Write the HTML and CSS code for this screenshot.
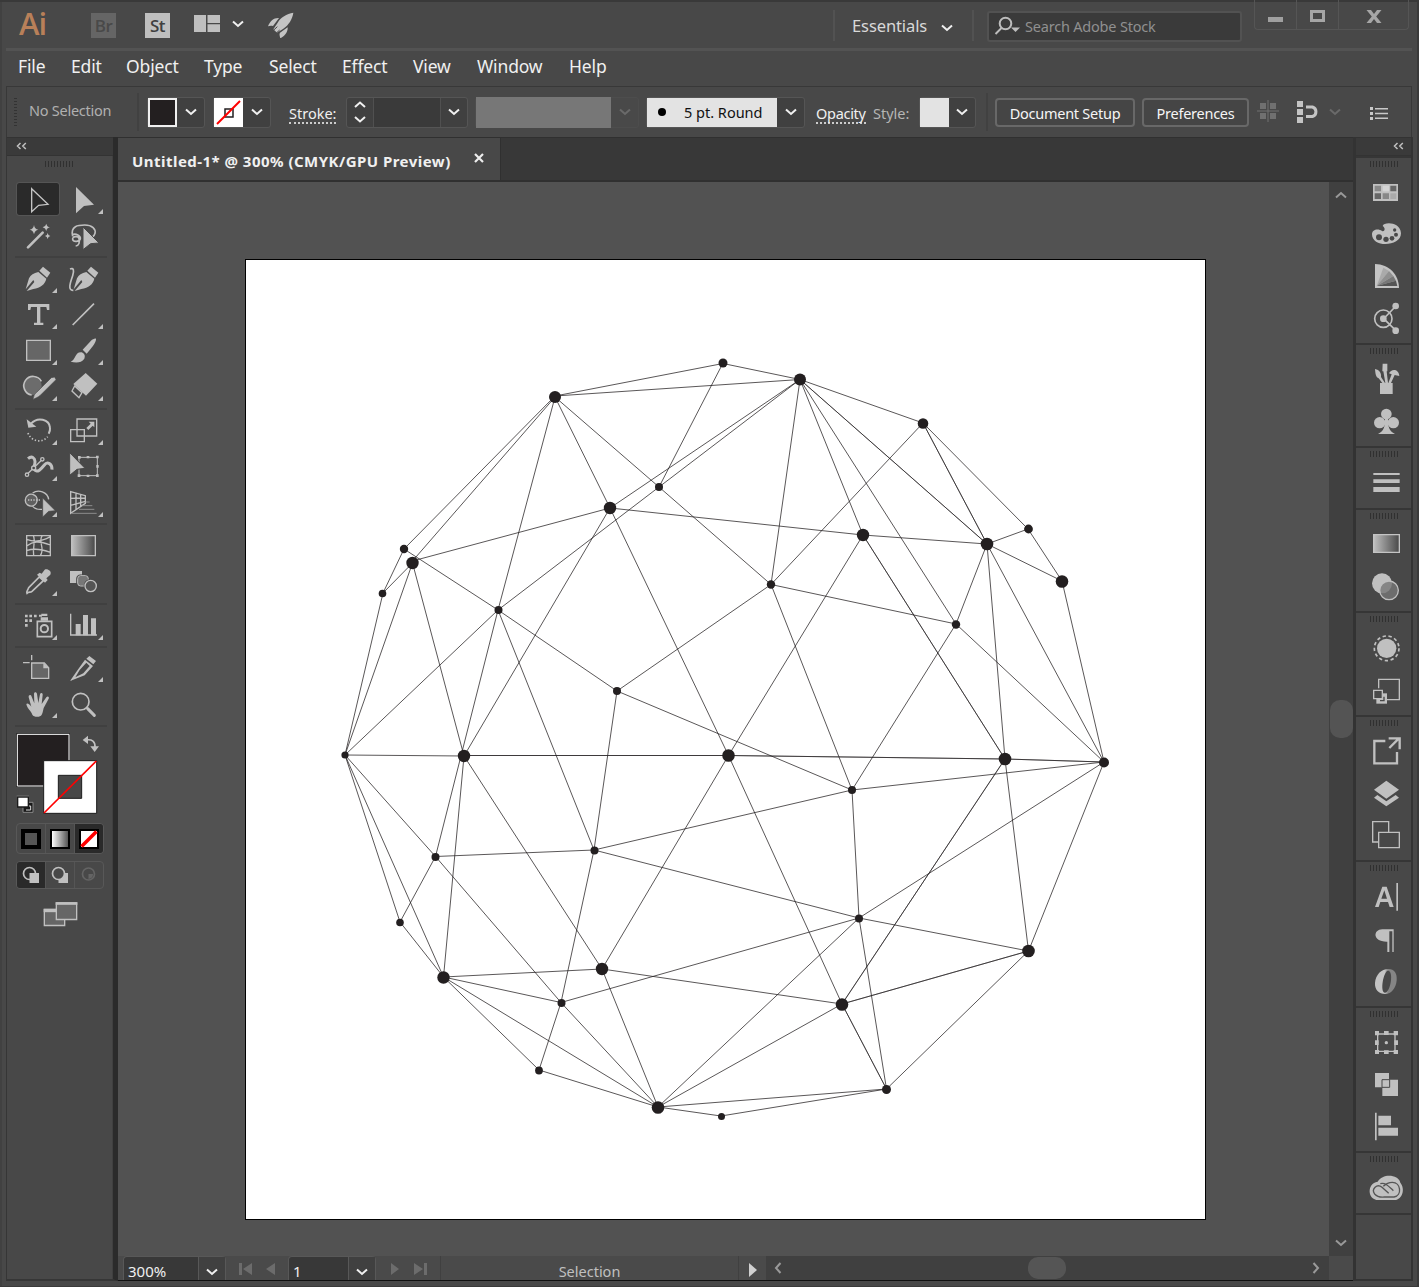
FILE: index.html
```html
<!DOCTYPE html>
<html lang="en">
<head>
<meta charset="utf-8">
<title>Untitled-1 @ 300%</title>
<link rel="stylesheet" href="styles.css">
</head>
<body>
<svg width="0" height="0" class="defs">
  <defs>
    <linearGradient id="fade"><stop offset="0" stop-color="#c0c0c0"/><stop offset="1" stop-color="#484848"/></linearGradient>
    <linearGradient id="glyph"><stop offset=".45" stop-color="#c4c4c4"/><stop offset=".6" stop-color="#858585"/></linearGradient>
    <symbol id="down" viewBox="0 0 12 8"><path d="M1 1.5l5 4.5 5-4.5" fill="none" stroke="currentColor" stroke-width="2"/></symbol>
    <symbol id="left2" viewBox="0 0 11 8"><path d="M4.500 1L1.500 4l3 3M9.800 1L6.800 4l3 3" fill="none" stroke="currentColor" stroke-width="1.500"/></symbol>
  </defs>
</svg>
<div class="window">
  <header class="titlebar">
    <span class="logo">Ai</span>
    <span class="app br">Br</span>
    <span class="app st">St</span>
    <svg class="arrange" viewBox="0 0 26 17"><path fill="#bfbfbf" d="M0 0h12v17H0zM13.500 0H26v8H13.500zM13.500 9.300H26V17H13.500z"/></svg>
    <svg class="chev light"><use href="#down"/></svg>
    <svg class="rocket" viewBox="806 34 78 78"><g fill="#c4c4c4"><path d="M882 36c-20 3-38 14-47 30l-13 20 11 10 19-12c16-11 27-28 30-48z"/><path d="M839 52c-16-1-27 9-33 25 5-2 10-2 15-1zM865 80c1 13-7 25-22 33-2-7-4-12-1-17z"/></g><path d="M820 91l14-13M829 99l12-11" stroke="#484848" stroke-width="3"/></svg>
    <span class="bar b1"></span>
    <span class="workspace">Essentials</span>
    <svg class="chev light ws"><use href="#down"/></svg>
    <span class="bar b2"></span>
    <div class="search">
      <svg viewBox="0 0 26 20"><g fill="none" stroke="#bdbdbd" stroke-width="2"><circle cx="11.500" cy="7.500" r="5.800"/><path d="M7.500 12L1.500 18"/></g><path d="M17 11.500h9L21.500 16z" fill="#bdbdbd"/></svg>
      <span>Search Adobe Stock</span>
    </div>
    <div class="controls"><span><i class="min"></i></span><span><i class="max"></i></span><span class="x"><svg viewBox="0 0 16 13" preserveAspectRatio="none"><path d="M.5 0h4.500l3 4 3-4h4.500L10.200 6.500 15.500 13H11L8 9l-3 4H.5l5.300-6.500z" fill="#a6a6a6"/></svg></span></div>
  </header>
  <nav class="menu"><span>File</span><span>Edit</span><span>Object</span><span>Type</span><span>Select</span><span>Effect</span><span>View</span><span>Window</span><span>Help</span></nav>
  <div class="options">
    <i class="vgrip"></i>
    <span class="nosel">No Selection</span>
    <i class="sep s1"></i>
    <div class="combo fill"><b class="sw dark"></b><svg class="chev"><use href="#down"/></svg></div>
    <div class="combo line"><b class="sw none"><svg viewBox="0 0 29 29"><path d="M11 11h8v8h-8z" fill="none" stroke="#231f20" stroke-width="1.500"/><path d="M3 26L26 3" stroke="red" stroke-width="2"/></svg></b><svg class="chev"><use href="#down"/></svg></div>
    <span class="link stroke">Stroke:</span>
    <div class="combo weight"><svg class="step" viewBox="0 0 12 22"><path d="M1 6l5-4.500L11 6M1 16l5 4.500 5-4.500" fill="none" stroke="#f0f0f0" stroke-width="2"/></svg><b class="field"></b><svg class="chev"><use href="#down"/></svg></div>
    <div class="combo profile"><b></b><svg class="chev dim"><use href="#down"/></svg></div>
    <div class="combo brush"><b><i></i>5 pt. Round</b><svg class="chev"><use href="#down"/></svg></div>
    <span class="link opacity">Opacity</span>
    <span class="style">Style:</span>
    <div class="combo look"><b class="sw"></b><svg class="chev"><use href="#down"/></svg></div>
    <i class="sep s2"></i>
    <button class="btn setup">Document Setup</button>
    <button class="btn prefs">Preferences</button>
    <svg class="pix" viewBox="0 0 22 22"><path fill="#707070" d="M3 3h6v6H3zM13 3h6v6h-6zM3 13h6v6H3zM13 13h6v6h-6zM10.500 0h1v22h-1zM0 10.500h22v1H0z"/></svg>
    <svg class="snap" viewBox="0 0 22 22"><path fill="#c4c4c4" d="M0 0h6v6H0zM0 8h6v6H0zM0 16h6v6H0z"/><path d="M9 6h6.500a5 5 0 0 1 0 9.500H9" fill="none" stroke="#c4c4c4" stroke-width="3"/></svg>
    <svg class="chev dim snapc"><use href="#down"/></svg>
    <svg class="list" viewBox="0 0 18 13"><path fill="#c8c8c8" d="M0 0h3v3H0zM0 5h3v3H0zM0 10h3v3H0zM5 1h13v1.500H5zM5 5.800h13v1.500H5zM5 10.500h13V12H5z"/></svg>
  </div>
  <main class="work">
    <aside class="tools">
      <div class="head"><svg><use href="#left2"/></svg></div>
      <i class="grip"></i>
      <section>
        <svg class="tool on" viewBox="51 144 126 96"><path d="M95 161l49 47-28 3-21 19z" fill="none" stroke="#c4c4c4" stroke-width="4"/></svg>
        <div class="tool fly"><svg viewBox="183 141 135 108"><path d="M228 156l54 53-30 4-24 22z"/></svg></div>
        <svg class="tool" viewBox="45 249 135 108"><path d="M84 337l44-44" stroke="#c0c0c0" stroke-width="8" stroke-linecap="round"/><path d="M102 270q2 13 13 14-11 2-13 14-2-12-13-14 11-1 13-14zM139 266q1 9 11 11-10 2-11 11-2-9-11-11 9-2 11-11zM143 294q1 8 8 9-7 1-8 9-1-8-8-9 7-1 8-9z"/></svg>
        <svg class="tool" viewBox="183 249 135 108"><g class="o" stroke-width="5"><path d="M218 304c-8-32 18-34 36-34 23 0 34 12 31 25-1 6-5 9-10 13M217 299c11-5 25 3 24 12-1 9-21 12-23 2-2-9 17-12 19-2 3 10 0 21-10 22"/></g><path stroke="#484848" stroke-width="3" d="M249 276l48 48-25 2-23 18z"/></svg>
      </section>
      <section>
        <div class="tool fly"><svg viewBox="45 378 135 108"><path d="M118 407l11-12 22 18-10 15zM115 411l24 20c-4 17-17 27-39 31l-20 6 23-27-3-6-23 28 10-33c5-10 14-16 28-19z"/></svg></div>
        <svg class="tool" viewBox="183 378 135 108"><path d="M262 407l11-12 22 18-10 15zM259 411l24 20c-4 17-17 27-39 31l-20 6 23-27-3-6-23 28 10-33c5-10 14-16 28-19z"/><path class="o" stroke-width="5" d="M210 402c11-5 13 5 8 20-7 20-16 45 2 44"/></svg>
        <div class="tool fly"><svg viewBox="45 486 135 108"><path d="M84 507h64v18h-7l-2-9h-18v47h9v7h-28v-7h9v-47H93l-2 9h-7z"/></svg></div>
        <div class="tool fly"><svg viewBox="183 486 135 108"><path class="o" stroke-width="5" d="M218 570l64-64"/></svg></div>
        <div class="tool fly"><svg viewBox="45 594 135 108"><path d="M80 616h71v60H80z" fill="#666" stroke="#c0c0c0" stroke-width="4"/></svg></div>
        <div class="tool fly"><svg viewBox="183 594 135 108"><path d="M248 644l25-27c6-6 17-10 15-3-1 10-14 25-28 42zM245 652c8 3 12 10 8 19-9 14-27 12-41 9 16-4 11-30 33-28z"/></svg></div>
        <div class="tool fly"><svg viewBox="45 702 135 108"><circle cx="98" cy="753" r="27" fill="#6c6c6c"/><path class="o" stroke-width="5" d="M124 739a28 28 0 1 0-29 41"/><path stroke="#484848" stroke-width="2" d="M154 728l10-2 4 8-47 47c-8 7-15 8-22 13 3-10 2-16 11-22z"/></svg></div>
        <div class="tool fly"><svg viewBox="183 702 135 108"><path d="M257 714l35 32-34 36-38-35z"/><path fill="#484848" stroke="#c0c0c0" stroke-width="4" d="M224 753l22 20-9 15-21-20z"/></svg></div>
      </section>
      <section>
        <div class="tool fly"><svg viewBox="45 24 135 108"><path class="o" stroke-width="6" d="M93 56c20-22 55-13 57 12 1 8-1 13-4 18"/><path d="M80 43l5 25 24-3z"/><path class="o" stroke-width="5" stroke-dasharray="4 6" d="M84 84c8 24 41 33 59 11"/></svg></div>
        <div class="tool fly"><svg viewBox="183 24 135 108"><path class="o" stroke-width="4" d="M231 42h59v51h-59zM212 74h41v36h-41z"/><path d="M266 50h17v17l-5-5-13 13-6-6 13-13z"/></svg></div>
        <div class="tool fly"><svg viewBox="45 132 135 108"><path class="o" stroke-width="9" d="M84 161c12-10 20-2 21 8s-6 18-2 24c8 14 22-3 30-13 9-12 24-4 23 14"/><path class="o" stroke-width="4" d="M80 209l46-45"/><g fill="#484848" stroke="#c0c0c0" stroke-width="4"><circle cx="81" cy="209" r="5"/><circle cx="101" cy="189" r="6"/><circle cx="127" cy="163" r="5"/></g></svg></div>
        <svg class="tool" viewBox="183 132 135 108"><path class="o" stroke-width="3" d="M237 157h55v55h-55z"/><path d="M234 153h8v8h-8zM260 153h8v7h-8zM288 152h8v8h-8zM289 180h7v8h-7zM288 208h8v8h-8zM260 209h8v7h-8zM233 208h8v8h-8z"/><path stroke="#484848" stroke-width="3" d="M209 143l46 47-24 3-22 18z"/></svg>
        <div class="tool fly"><svg viewBox="45 240 135 108"><g class="o" stroke-width="4"><path fill="#606060" d="M98 268a18 18 0 1 0 0 35c16-6 20-28 0-35z"/><path d="M98 264c16-12 45-4 48 19M98 304c8 10 17 10 28 9"/><path stroke-dasharray="4 4" d="M84 285h38"/></g><path stroke="#484848" stroke-width="2" d="M128 279l38 38-20 2-18 17z"/></svg></div>
        <div class="tool fly"><svg viewBox="183 240 135 108"><path class="o" stroke-width="4" d="M212 260l44 12v23l-44 30zM228 265v48M242 269v36M212 280l44-1M212 301l44-12"/><path d="M257 291h12M247 302h30M237 313h46M215 325h75" stroke="#8c8c8c" stroke-width="3"/></svg></div>
      </section>
      <section>
        <svg class="tool" viewBox="45 369 135 108"><path class="o" stroke-width="4" d="M80 392h71v60H80zM80 423c19-14 35-17 71-3M80 403c20 8 45 7 71-8M80 437c22-8 44-5 71 5M100 392c8 17-3 35 1 60M127 392c-15 19 10 35-6 60"/></svg>
        <svg class="tool" viewBox="183 369 135 108"><path d="M215 392h71v60h-71z" fill="url(#fade)" stroke="#c0c0c0" stroke-width="4"/></svg>
        <div class="tool fly"><svg viewBox="45 477 135 108"><path class="o" stroke-width="5" d="M118 516l12 11-34 32c-5 4-10 1-15 6-3-6 3-9 5-17z"/><path d="M111 509l8-6 6 3 9-12c6-5 23 3 17 15l-12 11 4 5-8 8z"/></svg></div>
        <svg class="tool" viewBox="183 477 135 108"><path d="M210 498h36v36h-36z"/><rect x="231" y="511" width="36" height="34" rx="10" fill="#777" stroke="#484848" stroke-width="5"/><rect x="233" y="512" width="32" height="31" rx="9" class="o" stroke-width="3"/><circle cx="272" cy="543" r="21" fill="#484848"/><circle cx="272" cy="543" r="17" fill="#555" stroke="#c0c0c0" stroke-width="4"/></svg>
      </section>
      <section>
        <div class="tool fly"><svg viewBox="45 609 135 108"><path class="o" stroke-width="5" d="M112 649h43v46h-43z"/><circle cx="133" cy="671" r="11" class="o" stroke-width="6"/><path d="M122 637h22v10h-22zM124 626h18v7h-18zM117 629h9v6h-9zM75 629h8v8h-8zM88 629h8v8h-8zM102 629h8v8h-8zM75 643h8v8h-8zM88 643h8v8h-8zM75 657h8v8h-8z"/></svg></div>
        <div class="tool fly"><svg viewBox="183 609 135 108"><path class="o" stroke-width="4" d="M212 626v64h79"/><path d="M227 657h15v34h-15zM249 630h15v61h-15zM273 640h15v51h-15z"/></svg></div>
      </section>
      <section>
        <svg class="tool" viewBox="45 -15 135 108"><path d="M95 24h38l13 14v32H95z" fill="#666" stroke="#c0c0c0" stroke-width="4"/><path d="M130 23v17h17z"/><path class="o" stroke-width="4" d="M95 0v16M69 23h20"/></svg>
        <div class="tool fly"><svg viewBox="183 -15 135 108"><path d="M259 11l9-8 20 15-8 10zM255 14l24 19-25 28-44 17 25-36zM259 23l-20 22-13 22 24-12 19-22z" fill-rule="evenodd"/></svg></div>
        <div class="tool fly"><svg viewBox="45 93 135 108"><path d="M97 179c-4-11-15-18-18-31 2-6 11 2 15 7L86 127c-1-8 7-9 9-2l8 20-1-28c0-7 8-7 9 0l4 27 5-26c2-6 9-5 8 2l-3 27 14-20c4-6 10-1 7 4l-15 28c-3 11-3 25-15 26-9 1-16-1-19-6z"/></svg></div>
        <svg class="tool" viewBox="183 93 135 108"><circle cx="242" cy="140" r="25" class="o" stroke-width="5"/><path class="o" stroke-width="9" stroke-linecap="round" d="M263 161l20 20"/></svg>
      </section>
      <div class="below">
        <svg class="colors" viewBox="45 231 270 246"><path d="M50 236h158v158H50z" fill="#231f20" stroke="#1e1e1e" stroke-width="3"/><path d="M52 238h155v155H52z" fill="#231f20" stroke="#fff" stroke-width="3"/><path d="M131 317h159v158H131z" fill="#fff" stroke="#1c1c1c" stroke-width="3"/><path d="M175 361v69h70v-69z" fill="#484848" stroke="#1c1c1c" stroke-width="3"/><path d="M132 474L289 318" stroke="red" stroke-width="5"/><path d="M257 255c20-3 29 4 28 22" fill="none" stroke="#c0c0c0" stroke-width="5"/><path fill="#c0c0c0" d="M248 255l16-13v25zM271 274h26l-13 17z"/><path d="M69 442h30v30H69z" fill="#191919" stroke="#888" stroke-width="3"/><path d="M82 453h10v12H78" fill="none" stroke="#ddd" stroke-width="3"/><path d="M53 426h32v30H53z" fill="#fff" stroke="#1a1a1a" stroke-width="4"/><path d="M50 423h37" stroke="#888" stroke-width="2"/></svg>
        <div class="trio modes"><span><i class="solid"></i></span><span><i class="grad"></i></span><span class="sel"><svg viewBox="0 0 20 20"><path d="M1 1h18v18H1z" fill="#fff" stroke="#000" stroke-width="2"/><path d="M2.500 17.500l15-15" stroke="red" stroke-width="3.500"/></svg></span></div>
        <div class="trio draw"><span class="sel"><svg viewBox="0 0 18 18"><circle cx="7.500" cy="7.500" r="6" class="o" stroke-width="1.700"/><path d="M7.500 7H17v10H7.500z"/></svg></span><span><svg viewBox="0 0 18 18"><path d="M7.500 7H17v10H7.500z"/><circle cx="7.500" cy="7.500" r="6" fill="#484848" stroke="#c0c0c0" stroke-width="1.700"/></svg></span><span><svg viewBox="0 0 18 18"><circle cx="8.500" cy="8" r="6" fill="none" stroke="#646464" stroke-width="1.700"/><path d="M8.500 8H13a5 5 0 0 1-4.500 5z" fill="#646464"/></svg></span></div>
        <svg class="screen" viewBox="130 737 105 77"><path fill="#666" stroke="#c0c0c0" stroke-width="4" d="M134 762h61v48h-61z"/><path d="M132 760h40v10h-40z"/><path fill="#666" stroke="#c0c0c0" stroke-width="4" d="M170 742h61v50h-61z"/><path d="M168 740h65v8h-65z"/></svg>
      </div>
    </aside>
    <div class="document">
      <div class="tabs"><div class="tab"><span>Untitled-1* @ 300% (CMYK/GPU Preview)</span><svg viewBox="0 0 10 10"><path d="M1 1l8 8M9 1L1 9" stroke="#eee" stroke-width="2.200"/></svg></div></div>
      <div class="stage">
        <div class="canvas">
          <svg class="artboard" viewBox="246 260 959 959">
            <path class="mesh" d="M555 396L723 363.500L800 379.500L555 396L404 549L383 593L345 755L400 922L443.500 977L539 1070L658 1107L721 1116L886.500 1089L1028.500 951L1104 762L1062 581L1028 529L923 423L800 379.500M723 363L659 487M498 610L659 487L800 379.500L610 508L412.500 561L555 397L498 610L435.500 856.500L400 922M555 397L659 487L771 584.500L923 423L987 544L1028 529M987 544L1062 581M555 397L610 508L728.500 755.500L842 1004L886.500 1089M800 379.500L771 584.500L956 624L800 379.500L863 535L610 508L464 756L412.500 563L383 593M345 755L412.500 563M404 549L498 610L617 691L852 790L771 584.500L617 691L594 850L498 610L345 755L435.500 856.500L561 1002.500L658 1107M345 755L464 756L443.500 977L345 755M464 755.500L728.500 755.500L1005 759L1104 762L987 544L956 624L1104 762L852 790L956 624M863 535L987 544L800 379.500M863 535L728.500 755.500L602 969L464 756M863 535L1005 759L987 544M435.500 856.500L594 850L852 790L859 918L594 850L561 1002.500L539 1070M443.500 977L602 969L842 1004L1028.500 951L859 918L1104 762M443.500 977L561 1002.500L859 918L886.500 1089L658 1107L443.500 977M602 969L658 1107L859 918M658 1107L842 1004L1005 759L1028.500 951"/>
            <path class="mesh twin" d="M800 379.500L987 544L923 423M863 535L1005 759L842 1004L1028.500 951M464 755.500L728.500 755.500L1005 759L1104 762M842 1004L886.500 1089"/>
            <g fill="#231f20"><circle cx="723" cy="363" r="4.500"/><circle cx="800" cy="379.500" r="6"/><circle cx="555" cy="397" r="6"/><circle cx="923" cy="423.500" r="5.300"/><circle cx="659" cy="487" r="4"/><circle cx="610" cy="508" r="6.200"/><circle cx="863" cy="535" r="6.200"/><circle cx="987" cy="544" r="6.300"/><circle cx="1028.500" cy="529" r="4.400"/><circle cx="1062" cy="581.500" r="6.300"/><circle cx="404" cy="549" r="4.200"/><circle cx="412.500" cy="563" r="6.200"/><circle cx="382.500" cy="593.500" r="3.800"/><circle cx="498.500" cy="610" r="4"/><circle cx="771" cy="584.500" r="4.200"/><circle cx="956" cy="624.500" r="4.200"/><circle cx="617" cy="691" r="4"/><circle cx="345" cy="755" r="3.600"/><circle cx="464" cy="756" r="6.200"/><circle cx="728.500" cy="755.500" r="6.300"/><circle cx="1005" cy="759" r="6.300"/><circle cx="1104" cy="762.500" r="5"/><circle cx="852" cy="790" r="4"/><circle cx="594.500" cy="850.500" r="4"/><circle cx="435.500" cy="857" r="4"/><circle cx="400" cy="922.500" r="3.800"/><circle cx="859" cy="918.500" r="4"/><circle cx="443.500" cy="977.500" r="6.200"/><circle cx="602" cy="969" r="6.200"/><circle cx="561.500" cy="1003" r="4"/><circle cx="842" cy="1004.500" r="6.300"/><circle cx="1028.500" cy="951" r="6.300"/><circle cx="539" cy="1070.500" r="3.900"/><circle cx="658" cy="1107.500" r="6.300"/><circle cx="721.500" cy="1116.500" r="3.500"/><circle cx="886.500" cy="1089.500" r="4.500"/></g>
          </svg>
        </div>
        <div class="vscroll"><svg class="chev"><use href="#down"/></svg><i></i><svg class="chev"><use href="#down"/></svg></div>
      </div>
      <footer class="status">
        <div class="entry zoom"><span>300%</span><svg class="chev"><use href="#down"/></svg></div>
        <svg class="nav n1" viewBox="0 0 38 14"><path fill="#6c6c6c" d="M1 1h3v12H1zM14 1v12L5 7zM37 1v12l-9-6z"/></svg>
        <div class="entry page"><span>1</span><svg class="chev"><use href="#down"/></svg></div>
        <svg class="nav n2" viewBox="0 0 38 14"><path fill="#6c6c6c" d="M37 1h-3v12h3zM24 1v12l9-6zM1 1v12l8-6z"/></svg>
        <span class="current">Selection</span>
        <span class="play"><svg viewBox="0 0 8 14"><path fill="#d0d0d0" d="M0 0v14l8-7z"/></svg></span>
        <div class="hscroll"><svg class="chev"><use href="#down"/></svg><i></i><svg class="chev"><use href="#down"/></svg></div>
      </footer>
    </div>
    <aside class="dock">
      <div class="head"><svg><use href="#left2"/></svg></div>
      <section><i class="grip"></i>
        <svg viewBox="108 123 165 126"><path d="M159 162h75v51h-75z"/><path fill="#888" d="M164 167h19v17h-19zM188 190h19v17h-19z"/><path fill="#666" d="M211 167h18v17h-18zM164 190h19v17h-19z"/><path fill="#d4d4d4" d="M188 167h19v17h-19z"/><path fill="#aaa" d="M211 190h18v17h-18z"/></svg>
        <svg viewBox="108 249 165 126"><path d="M188 288c3-13 54-13 55 22 0 40-87 45-87 3 0-16 20-18 30-10 8 3 12-8 2-15z"/><g fill="#484848"><circle cx="177" cy="322" r="9"/><circle cx="198" cy="328" r="8"/><circle cx="216" cy="325" r="7"/><circle cx="228" cy="314" r="6"/><circle cx="224" cy="300" r="5"/></g></svg>
        <svg viewBox="108 375 165 126"><path fill="#c4c4c4" d="M165 402c43 1 71 31 72 72h-72z"/><path fill="#aaa" d="M170 468l20-55 17 10z"/><path fill="#909090" d="M170 468l37-45 13 15z"/><path fill="#777" d="M170 468l50-30 8 14z"/><path fill="#555" d="M170 468l58-16 4 16z"/></svg>
        <svg viewBox="108 501 165 126"><circle cx="190" cy="566" r="26" class="o" stroke-width="5"/><path class="o" stroke-width="5" d="M228 528l-37 38 37 36"/><circle cx="190" cy="566" r="10"/><circle cx="227" cy="528" r="10"/><circle cx="227" cy="602" r="10"/></svg>
      </section>
      <section><i class="grip"></i>
        <svg viewBox="108 684 165 126"><path d="M180 759h38v33h-38zM188 701h14v23h-15zM190 724h10l4 35h-8zM165 717c14 2 20 15 18 24l12 18h-8l-11-14c-9-4-10-15-11-28zM207 730c6-14 29-15 31 8l-14-3-11 24h-8l10-26z"/></svg>
        <svg viewBox="108 810 165 126"><circle cx="199" cy="852" r="16"/><circle cx="179" cy="878" r="17"/><circle cx="220" cy="878" r="17"/><path d="M195 865h9c0 25 3 39 21 47h-51c18-8 21-22 21-47z"/></svg>
      </section>
      <section class="roomy"><i class="grip"></i>
        <svg viewBox="108 63 165 126"><path d="M160 99h79v6h-79zM160 118h79v11h-79zM160 141h79v15h-79z"/></svg>
      </section>
      <section><i class="grip"></i>
        <svg viewBox="108 249 165 126"><path d="M161 284h77v53h-77z" fill="url(#fade)" stroke="#c4c4c4" stroke-width="4"/></svg>
        <svg viewBox="108 375 165 126"><circle cx="186" cy="430" r="30"/><circle cx="207" cy="451" r="28" fill="#777" fill-opacity=".8" stroke="#c0c0c0" stroke-width="4"/></svg>
      </section>
      <section class="roomy"><i class="grip"></i>
        <svg viewBox="108 558 165 126"><circle cx="200" cy="625" r="29"/><circle cx="200" cy="625" r="37" class="o" stroke-width="5" stroke-dasharray="10 7.880"/></svg>
        <svg viewBox="108 684 165 126"><path class="o" stroke-width="4" d="M176 745v-27h62v61h-37"/><path d="M169 760h32v31h-32z"/><path d="M161 751h26v25h-26z" fill="#484848" stroke="#c0c0c0" stroke-width="4"/><path d="M180 782h12v-12" fill="none" stroke="#484848" stroke-width="4"/></svg>
      </section>
      <section><i class="grip"></i>
        <svg viewBox="108 870 165 126"><path class="o" stroke-width="7" d="M196 903h-33v67h68v-34M208 924l28-28M206 895h33v33"/></svg>
        <svg viewBox="108 996 165 126"><path d="M199 1022l38 27-38 27-37-27zM162 1073l10-8 27 19 28-19 10 8-38 26z"/></svg>
        <svg viewBox="108 1122 165 126"><path class="o" stroke-width="4" d="M158 1145h48v61h-48z"/><path d="M176 1177h62v46h-62z" fill="#484848" stroke="#c0c0c0" stroke-width="4"/></svg>
      </section>
      <section class="roomy"><i class="grip"></i>
        <svg viewBox="108 75 165 126"><path d="M165 171l22-61h13l21 61h-12l-5-15h-23l-5 15zM184 146h17l-8-25z" fill-rule="evenodd"/><path d="M229 99h5v83h-5z"/></svg>
        <svg viewBox="108 201 165 126"><path d="M221 238v68h-4v-62h-9v62h-6v-31c-46 1-43-37-15-37z"/></svg>
        <svg viewBox="108 327 165 126"><path fill="url(#glyph)" fill-rule="evenodd" d="M205 357c18 0 27 13 25 34-2 24-16 41-34 41-20 0-32-13-31-33 2-25 19-42 40-42zm-1 5c-14 2-25 65-9 66 17-1 27-66 9-66z"/></svg>
      </section>
      <section><i class="grip"></i>
        <svg viewBox="108 513 165 126"><path class="o" stroke-width="4" d="M173 552h52v52h-52z"/><path d="M165 543h12v13h-12zM192 543h14v12h-14zM221 543h13v13h-13zM165 571h11v14h-11zM223 571h11v14h-11zM165 600h12v12h-12zM192 601h14v11h-14zM221 600h13v12h-13z"/><circle cx="199" cy="578" r="5"/></svg>
        <svg viewBox="108 639 165 126"><path d="M165 669h42v20h27v49h-47v-26h-22z"/><path d="M186 689h23v23h-23z" fill="none" stroke="#484848" stroke-width="3"/></svg>
        <svg viewBox="108 765 165 126"><path d="M165 788h5v83h-5zM175 797h38v29h-38zM175 833h59v24h-59z"/></svg>
      </section>
      <section class="roomy"><i class="grip"></i>
        <svg viewBox="108 948 165 126"><path d="M176 1050c-34 1-37-50-3-55 17-27 63-20 68 3 15 18 7 51-17 52z"/><g fill="none" stroke="#555" stroke-width="4"><path d="M206 1030l-20-18c-15-13-33 6-22 20 8 9 22 10 30 9h28c25-4 21-44-5-44-12 0-21 6-27 12"/><path d="M181 1001c16-4 25 8 39 21"/></g></svg>
      </section>
      <section class="rest"></section>
    </aside>
  </main>
</div>
</body>
</html>
```
FILE: styles.css
```css
* { box-sizing: border-box; }
body { margin: 0; background: #484848; font-family: "Noto Sans", "Open Sans", sans-serif; color: #f0f0f0; }
.defs { position: absolute; }
svg { display: block; flex: none; }
i { display: block; }
.o { fill: none; stroke: #c0c0c0; }
.window { width: 1419px; height: 1287px; display: flex; flex-direction: column; overflow: hidden; padding: 0 5px 0 6px; border: solid #3a3a3a; border-width: 0 2px 1px 0; box-shadow: inset 0 2px #393939, inset 2px 0 #414141; }
.chev { width: 12px; height: 8px; color: #f0f0f0; }
.chev.dim { color: #6a6a6a; }

.titlebar { height: 51px; flex: none; display: flex; align-items: flex-start; border-bottom: 3px solid #535353; }
.logo { width: 85px; padding-left: 13px; font: 600 31px/46px "Open Sans", sans-serif; letter-spacing: -1px; color: #b98059; }
.app { width: 25px; height: 25px; margin-top: 13px; font: 600 17px/26px "Open Sans", sans-serif; letter-spacing: -.5px; text-align: center; background: #656565; color: #494949; }
.st { margin-left: 29px; background: #bfbfbf; color: #404040; }
.arrange { width: 26px; height: 17px; margin: 15px 12px 0 24px; }
.titlebar > .chev { margin-top: 20px; }
.rocket { width: 26px; height: 26px; margin: 12px 0 0 24px; }
.bar { width: 2px; height: 31px; margin-top: 10px; background: #525252; }
.b1 { margin-left: 539px; }
.workspace { width: 75px; margin-left: 17px; font-size: 16.500px; line-height: 51px; color: #d9d9d9; white-space: nowrap; letter-spacing: -.1px; }
.titlebar > .ws { margin: 24px 0 0 14px; }
.b2 { margin-left: 19px; }
.search { width: 255px; height: 31px; margin: 11px 0 0 13px; padding: 0 0 2px 5px; display: flex; align-items: center; gap: 5px; background: #3a3a3a; border: 2px solid #525252; border-radius: 3px; font-size: 14.500px; letter-spacing: -.2px; color: #909090; white-space: nowrap; }
.search svg { width: 26px; height: 20px; }
.controls { margin-left: 12px; height: 30px; display: flex; border: 1px solid #555; border-top: 0; border-radius: 0 0 4px 4px; }
.controls span { width: 42px; display: flex; align-items: center; justify-content: center; border-right: 1px solid #555; padding-top: 3px; }
.controls span.x { width: 69px; border: 0; }
.min { width: 15px; height: 5px; margin-top: 7px; background: #a0a0a0; }
.max { width: 15px; height: 12px; border: 3px solid #a6a6a6; }
.x svg { width: 16px; height: 13px; }

.menu { height: 35px; flex: none; display: flex; padding-left: 12px; font-size: 17.500px; line-height: 31px; letter-spacing: -.15px; }
.menu span { width: 53px; white-space: nowrap; }
.menu span:nth-child(2) { width: 55px; }
.menu span:nth-child(3) { width: 78px; }
.menu span:nth-child(4) { width: 65px; }
.menu span:nth-child(5) { width: 73px; }
.menu span:nth-child(6) { width: 71px; }
.menu span:nth-child(7) { width: 64px; }
.menu span:nth-child(8) { width: 92px; }

.options { height: 51px; flex: none; display: flex; align-items: center; padding-left: 7px; border: 1px solid #383838; font-size: 14.500px; white-space: nowrap; border-bottom: 0; }
.vgrip { width: 3px; height: 29px; background: repeating-linear-gradient(#333 0 1px, transparent 1px 3px); }
.nosel { width: 95px; margin-left: 12px; color: #b0b0b0; margin-top: -4px; letter-spacing: -.25px; }
.sep { width: 2px; height: 38px; background: #414141; }
.s1 { margin-left: 13px; }
.s2 { margin-left: 10px; }
.combo { height: 31px; display: flex; align-items: center; background: #404040; border: 1px solid #555; border-radius: 3px; }
.combo > .chev { margin: 0 auto; }
.sw { display: block; width: 29px; height: 29px; background: #e3e3e3; }
.sw.dark { background: #231f20; border: 2px solid #f0f0f0; }
.sw.none { background: #fff; }
.fill { width: 58px; margin-left: 8px; }
.line { width: 58px; margin-left: 8px; }
.link { border-bottom: 2px dotted #ccc; line-height: 18px; margin-top: 4px; }
.stroke { width: 47px; margin-left: 18px; }
.weight { width: 122px; margin-left: 10px; }
.step { width: 12px; height: 22px; margin: 0 7px; }
.field { width: 68px; height: 29px; background: #3a3a3a; border: solid #505050; border-width: 0 1px; }
.profile { width: 164px; margin-left: 7px; background: #494949; border-color: #4d4d4d; }
.profile b { width: 135px; height: 31px; background: #777; }
.brush { width: 159px; margin-left: 7px; }
.brush b { display: flex; align-items: center; width: 130px; height: 29px; padding-left: 11px; background: #e3e3e3; color: #111; font-weight: 400; }
.brush i { width: 8px; height: 8px; border-radius: 50%; margin-right: 18px; background: #000; }
.opacity { width: 50px; margin-left: 11px; letter-spacing: -.3px; }
.style { width: 38px; margin: 2px 0 0 7px; color: #b5b5b5; }
.look { width: 57px; margin-left: 8px; }
.btn { height: 29px; padding: 1px 0 0; border: 2px solid #686868; border-radius: 4px; background: #454545; color: #f5f5f5; font: inherit; letter-spacing: -.25px; }
.setup { width: 140px; margin-left: 7px; }
.prefs { width: 107px; margin-left: 7px; }
.pix { width: 22px; height: 22px; margin: -2px 0 0 8px; }
.snap { width: 22px; height: 22px; margin: -1px 0 0 18px; }
.snapc { margin-left: 10px; }
.list { width: 18px; height: 13px; margin-left: 29px; margin-top: 2px; }

.work { flex: 1; min-height: 0; display: flex; padding-bottom: 5px; }
.head { height: 19px; flex: none; background: #3a3a3a; border: solid #333; border-width: 1px 0; color: #c0c0c0; }
.head svg { width: 11px; height: 8px; }
.grip { width: 28px; height: 6px; background: repeating-linear-gradient(90deg, #303030 0 1px, transparent 1px 3px); }

.tools { width: 112px; flex: none; border: solid #363636; border-width: 0 0 2px 1px; border-right: 5px solid #2b2b2b; display: flex; flex-direction: column; box-shadow: inset -1px 0 #404040; }
.tools .head { padding: 4px 0 0 9px; }
.tools > .grip { margin: 5px 0 15px 38px; }
.tools section { display: grid; grid-template-columns: 45px 45px; column-gap: 1px; padding: 3px 0 2px; margin: 0 6px 0 8px; border-top: 2px solid #404040; }
.tools > .grip + section { border-top: 0; padding-top: 0; }
.tools section:nth-of-type(2), .tools section:nth-of-type(4) { padding-bottom: 3px; }
.tools section:nth-of-type(6) { padding: 2px 0 3px; }
.tool { width: 45px; height: 36px; fill: #c0c0c0; position: relative; }
.tool svg { width: 45px; height: 36px; }
.tool.on { width: 42px; height: 32px; margin: 1px 0 0 2px; background: #2a2a2a; outline: 1px solid #555; border-radius: 2px; }
.fly::after { content: ""; position: absolute; right: 3px; bottom: 4px; width: 5px; height: 5px; background: #c0c0c0; clip-path: polygon(100% 0, 100% 100%, 0 100%); }
.below { margin: 0 6px 0 8px; border-top: 2px solid #404040; fill: #c0c0c0; }
.colors { width: 90px; height: 82px; margin-top: 5px; }
.trio { display: flex; width: 88px; height: 31px; margin: 9px 0 0 1px; border: 1px solid #585858; border-radius: 4px; overflow: hidden; }
.trio span { flex: 1; display: flex; align-items: center; justify-content: center; border-left: 1px solid #555; }
.trio span:first-child { border: 0; }
.trio .sel { background: #2a2a2a; }
.modes i, .modes svg { width: 20px; height: 20px; }
.solid { background: #555; border: 4px solid #000; }
.grad { background: linear-gradient(90deg, #fff, #555); border: 2px solid #000; }
.draw { height: 28px; margin-top: 7px; }
.draw svg { width: 18px; height: 18px; }
.screen { width: 35px; height: 26px; margin: 12px 0 0 28px; }

.document { width: 1235px; flex: none; display: flex; flex-direction: column; border-bottom: 1px solid #111; }
.tabs { height: 45px; flex: none; display: flex; background: #383838; border: solid #303030; border-width: 1px 0 2px; }
.tab { width: 383px; padding-left: 14px; display: flex; align-items: center; background: #484848; border-right: 1px solid #303030; font-size: 15px; font-weight: 700; letter-spacing: .47px; white-space: nowrap; }
.tab span { width: 342px; margin-top: 3px; }
.tab svg { width: 10px; height: 10px; margin-top: -2px; }
.stage { flex: 1; display: flex; min-height: 0; }
.canvas { width: 1211px; background: #525252; padding: 77px 0 0 127px; }
.artboard { width: 961px; height: 961px; background: #fff; border: 1px solid #000; }
.mesh { fill: none; stroke: #231f20; stroke-width: .75; }
.mesh.twin { stroke-width: .5; }
.vscroll { width: 24px; background: #404040; display: flex; flex-direction: column; align-items: center; justify-content: space-between; padding: 9px 0; }
.vscroll .chev, .hscroll .chev { color: #999; }
.vscroll .chev:first-child { transform: rotate(180deg); }
.vscroll i { width: 23px; height: 38px; border-radius: 10px; background: #545454; }
.status { height: 24px; flex: none; display: flex; background: #4a4a4a; padding-left: 5px; }
.entry { width: 103px; height: 24px; display: flex; border: 1px solid #585858; border-bottom: 0; border-radius: 4px 4px 0 0; background: #383838; font-size: 15px; line-height: 18px; }
.entry span { flex: 1; padding: 5px 0 0 4px; }
.entry .chev { box-sizing: content-box; padding: 11px 7px 4px; border-left: 1px solid #585858; background: #404040; }
.page { width: 88px; }
.nav { width: 38px; height: 14px; }
.n1 { margin: 6px 12px 0 12px; }
.n2 { margin: 6px 12px 0 14px; }
.current { width: 299px; border: solid #404040; border-width: 0 1px; text-align: center; font-size: 14.500px; line-height: 20px; padding-top: 5px; color: #c0c0c0; }
.play { width: 27px; padding: 7px 0 0 10px; }
.play svg { width: 8px; height: 14px; }
.hscroll { width: 563px; display: flex; align-items: center; background: #404040; padding: 0 7px 0 6px; }
.hscroll .chev:first-child { transform: rotate(90deg); }
.hscroll .chev:last-child { transform: rotate(-90deg); }
.hscroll i { width: 38px; height: 22px; border-radius: 10px; background: #555; margin: 0 auto 0 244px; }

.dock { flex: none; width: 60px; border: solid #333; border-width: 0 2px 2px 3px; display: flex; flex-direction: column; fill: #c0c0c0; }
.dock .head { padding: 4px 0 0 37px; }
.dock section { border-top: 2px solid #363636; padding-bottom: 4px; }
.dock section svg { width: 55px; height: 42px; }
.dock .grip { margin: 3px 0 4px 14px; }
.dock .roomy { padding-bottom: 5px; }
.dock .rest { flex: 1; padding: 0; }
```
